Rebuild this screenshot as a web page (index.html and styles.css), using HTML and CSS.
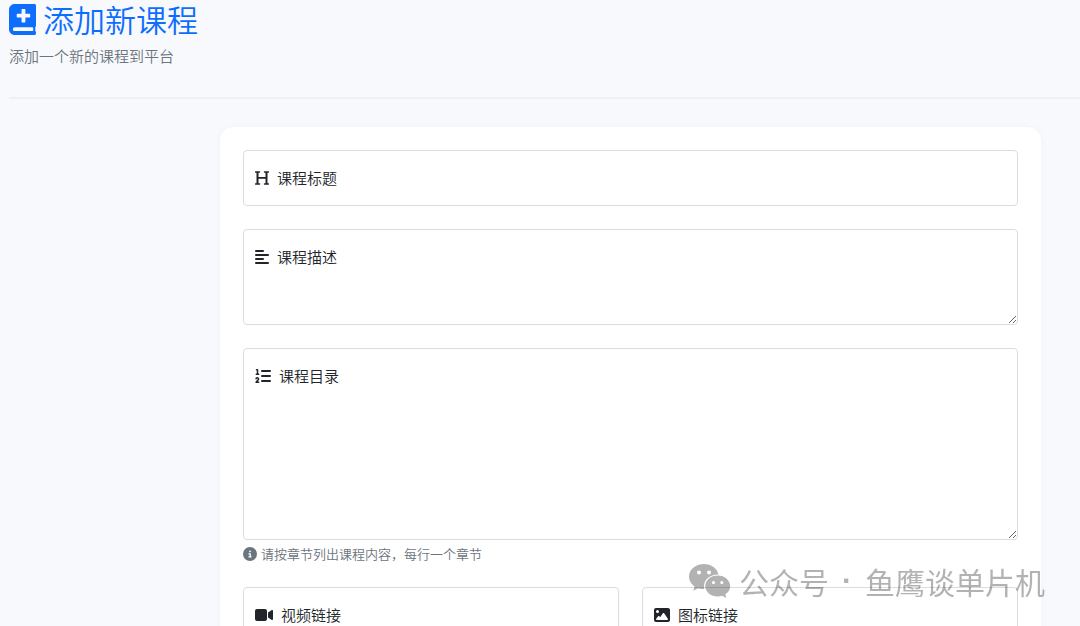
FILE: index.html
```html
<!DOCTYPE html>
<html lang="zh-CN">
<head>
  <meta charset="UTF-8">
  <meta name="viewport" content="width=device-width, initial-scale=1">
  <title>添加新课程</title>
  <link rel="stylesheet" href="styles.css">
</head>
<body>
  <header class="page-header">
    <h1>
      <svg class="title-icon" viewBox="0 0 448 512" aria-hidden="true"><path fill-rule="evenodd" d="M448 358V26c0-16-10-26-26-26H96C42 0 0 42 0 96v320c0 54 42 96 96 96h326c16 0 26-10 26-26v-16c0-6-3-13-10-19-3-16-3-61 0-74 7-3 10-10 10-19zM144 160h64V96c0-9 7-16 16-16h32c9 0 16 7 16 16v64h64c9 0 16 7 16 16v32c0 9-7 16-16 16h-64v64c0 9-7 16-16 16h-32c-9 0-16-7-16-16v-64h-64c-9 0-16-7-16-16v-32c0-9 7-16 16-16zM381 448H96c-16 0-32-13-32-32s16-32 32-32h285c16 0 22 8 22 32s-6 32-22 32z"/></svg>
      添加新课程
    </h1>
    <p>添加一个新的课程到平台</p>
  </header>

  <main>
    <form class="card">
      <div class="field">
        <input type="text" id="title" class="control">
        <label for="title">
          <svg class="icon icon-narrow" viewBox="0 0 448 512" aria-hidden="true"><path d="M16 40H144a20 20 0 0 1 0 48H112V224H336V88H304a20 20 0 0 1 0-48H432a20 20 0 0 1 0 48H400V424H432a20 20 0 0 1 0 48H304a20 20 0 0 1 0-48H336V280H112V424H144a20 20 0 0 1 0 48H16a20 20 0 0 1 0-48H48V88H16a20 20 0 0 1 0-48z"/></svg>
          课程标题
        </label>
      </div>

      <div class="field">
        <textarea id="description" class="control description"></textarea>
        <label for="description">
          <svg class="icon icon-narrow" viewBox="0 0 448 512" aria-hidden="true"><path d="M32 32H256a32 32 0 0 1 0 64H32a32 32 0 0 1 0-64zM32 160H416a32 32 0 0 1 0 64H32a32 32 0 0 1 0-64zM32 288H256a32 32 0 0 1 0 64H32a32 32 0 0 1 0-64zM32 416H416a32 32 0 0 1 0 64H32a32 32 0 0 1 0-64z"/></svg>
          课程描述
        </label>
      </div>

      <div class="field">
        <textarea id="outline" class="control outline" aria-describedby="outline-hint"></textarea>
        <label for="outline">
          <svg class="icon" viewBox="0 0 512 512" aria-hidden="true"><path d="M24 56c0-13.3 10.7-24 24-24H80c13.3 0 24 10.7 24 24V176h16c13.3 0 24 10.7 24 24s-10.7 24-24 24H40c-13.3 0-24-10.7-24-24s10.7-24 24-24H56V80H48C34.7 80 24 69.3 24 56zM86.7 341.2c-6.5-7.4-18.3-6.9-24 1.2L51.5 357.9c-7.7 10.8-22.7 13.3-33.5 5.6s-13.3-22.7-5.6-33.5l11.1-15.6c23.7-33.2 72.3-35.6 99.2-4.9c21.3 24.4 20.8 60.9-1.1 84.7L86.8 432H120c13.3 0 24 10.7 24 24s-10.7 24-24 24H32c-9.5 0-18.2-5.6-22-14.4s-2.1-18.9 4.3-25.9l72-78c5.3-5.8 5.4-14.6 .3-20.5zM224 64H480a32 32 0 0 1 0 64H224a32 32 0 0 1 0-64zM224 224H480a32 32 0 0 1 0 64H224a32 32 0 0 1 0-64zM224 384H480a32 32 0 0 1 0 64H224a32 32 0 0 1 0-64z"/></svg>
          课程目录
        </label>
        <div class="hint" id="outline-hint">
          <svg class="hint-icon" viewBox="0 0 512 512" aria-hidden="true"><path d="M256 512A256 256 0 1 0 256 0a256 256 0 1 0 0 512zM216 336h24V272H216c-13.3 0-24-10.7-24-24s10.7-24 24-24h48c13.3 0 24 10.7 24 24v88h8c13.3 0 24 10.7 24 24s-10.7 24-24 24H216c-13.3 0-24-10.7-24-24s10.7-24 24-24zm40-208a32 32 0 1 1 0 64 32 32 0 1 1 0-64z"/></svg>
          请按章节列出课程内容，每行一个章节
        </div>
      </div>

      <div class="row">
        <div class="field">
          <input type="url" id="video" class="control">
          <label for="video">
            <svg class="icon icon-wide" viewBox="0 0 576 512" aria-hidden="true"><path d="M0 128C0 92.7 28.7 64 64 64H320c35.3 0 64 28.7 64 64V384c0 35.3-28.7 64-64 64H64c-35.3 0-64-28.7-64-64V128zM559.1 99.8c10.4 5.6 16.9 16.4 16.9 28.2V384c0 11.8-6.5 22.6-16.9 28.2s-23 5-32.9-1.6l-96-64L416 337.1V320 192 174.9l14.2-9.5 96-64c9.8-6.5 22.4-7.2 32.9-1.6z"/></svg>
            视频链接
          </label>
        </div>
        <div class="field">
          <input type="url" id="image" class="control">
          <label for="image">
            <svg class="icon" viewBox="0 0 512 512" aria-hidden="true"><path d="M0 96C0 60.7 28.7 32 64 32H448c35.3 0 64 28.7 64 64V416c0 35.3-28.7 64-64 64H64c-35.3 0-64-28.7-64-64V96zM323.8 202.5c-4.5-6.6-11.9-10.5-19.8-10.5s-15.4 3.9-19.8 10.5l-87 127.6L170.7 297c-4.6-5.7-11.5-9-18.7-9s-14.2 3.3-18.7 9l-64 80c-5.8 7.2-6.9 17.1-2.9 25.4s12.4 13.6 21.6 13.6h96 32H424c8.9 0 17.1-4.9 21.2-12.8s3.6-17.4-1.4-24.7l-120-176zM112 192a48 48 0 1 0 0-96 48 48 0 1 0 0 96z"/></svg>
            图标链接
          </label>
        </div>
      </div>
    </form>
  </main>

  <div class="watermark">
    <svg class="wechat" viewBox="0 0 42 34" aria-hidden="true">
      <path fill-rule="evenodd" d="M15 0C6.500 0 0 5.600 0 12.700c0 4 2.200 7.500 5.600 9.800L4.200 26.800l5-2.600c1.900.6 3.900.9 6.200.9-.3-1-.4-1.900-.4-2.900 0-6.700 6.300-11.700 13.500-11.700h1C28.200 4.300 22.300 0 15 0zM10 6.500a2 2 0 1 1 0 4 2 2 0 0 1 0-4zm10 0a2 2 0 1 1 0 4 2 2 0 0 1 0-4z"/>
      <path fill-rule="evenodd" d="M28.700 11.500c-7 0-12.500 4.700-12.500 10.500s5.500 10.500 12.500 10.500c1.600 0 3.100-.2 4.500-.7l4.200 2.200-1.100-3.700c3.100-2 4.900-4.900 4.900-8.300 0-5.800-5.600-10.500-12.500-10.500zm-4.200 5.500a1.600 1.600 0 1 1 0 3.200 1.600 1.600 0 0 1 0-3.200zm8.300 0a1.600 1.600 0 1 1 0 3.200 1.600 1.600 0 0 1 0-3.200z"/>
    </svg>
    <span>公众号</span>
    <span class="dot">·</span>
    <span>鱼鹰谈单片机</span>
  </div>
</body>
</html>
```
FILE: styles.css
```css
* {
  box-sizing: border-box;
}
body {
  height: 100vh;
  margin: 0;
  overflow: hidden;
  background-color: #f8f9fd;
  color: #212529;
  font-family: "Noto Sans CJK SC", sans-serif;
  font-size: 15px;
  font-weight: 350;
  line-height: 24px;
}
svg {
  flex: none;
  fill: currentColor;
}
.page-header {
  margin-left: 9px;
  padding-bottom: 29px;
  border-bottom: 2px solid #eef0f3;
}
h1 {
  display: flex;
  align-items: center;
  gap: 7px;
  margin: 0;
  color: #0d6efd;
  font-size: 31px;
  font-weight: 350;
  line-height: 38px;
}
.title-icon {
  width: 27px;
  height: 31px;
}
.page-header p {
  margin: 6px 0 0;
  color: #6c757d;
}
.card {
  margin: 28px 39px 0 220px;
  padding: 23px;
  background-color: #fff;
  border-radius: 14px;
  box-shadow: 0 0 8px rgba(0, 0, 0, 0.03);
}
.field {
  position: relative;
  margin-bottom: 23px;
}
.control {
  display: block;
  width: 100%;
  height: 56px;
  padding: 16px 12px;
  border: 1px solid #d9dde1;
  border-radius: 4px;
  background-color: #fff;
  color: #212529;
  font: inherit;
}
textarea.control {
  resize: vertical;
}
.description {
  height: 96px;
}
.outline {
  height: 192px;
}
.field label {
  position: absolute;
  top: 16px;
  left: 12px;
  display: flex;
  align-items: center;
  gap: 8px;
}
.icon {
  width: 16px;
  height: 16px;
}
.icon-narrow {
  width: 14px;
}
.icon-wide {
  width: 18px;
}
.hint {
  display: flex;
  align-items: center;
  gap: 4px;
  margin-top: 4px;
  color: #6c757d;
  font-size: 13px;
  line-height: 20px;
}
.hint-icon {
  width: 14px;
  height: 14px;
}
.row {
  display: grid;
  grid-template-columns: 1fr 1fr;
  gap: 23px;
}
.watermark {
  position: fixed;
  right: 35px;
  bottom: 25px;
  display: flex;
  align-items: center;
  gap: 8px;
  color: rgba(0, 0, 0, 0.3);
  font-size: 30px;
  font-weight: 400;
  line-height: 40px;
  pointer-events: none;
}
.dot {
  padding: 0 5px;
  font-family: "Liberation Sans", sans-serif;
  font-weight: 700;
}
.wechat {
  width: 42px;
  height: 34px;
}
```
